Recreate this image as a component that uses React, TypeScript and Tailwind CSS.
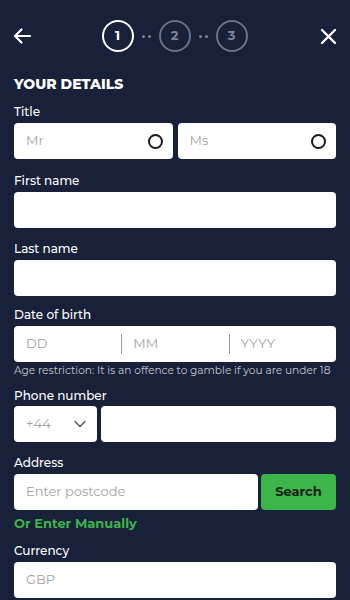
import React from "react";

const font = { fontFamily: '"Montserrat", "Open Sans", "Liberation Sans", sans-serif' };

function Label({ children, className = "" }: { children: React.ReactNode; className?: string }) {
  return <div className={`text-[12px] leading-[16px] font-medium text-white ${className}`}>{children}</div>;
}

function Box({ children, className = "" }: { children?: React.ReactNode; className?: string }) {
  return (
    <div className={`h-[36px] bg-white rounded-[4px] flex items-center text-[13px] text-[#a3a3a3] ${className}`}>
      {children}
    </div>
  );
}

function Radio({ label }: { label: string }) {
  return (
    <Box className="flex-1 justify-between pl-[12px] pr-[10px]">
      <span>{label}</span>
      <span className="w-[15px] h-[15px] rounded-full border-[2px] border-[#1a1a1a]" />
    </Box>
  );
}

function Step({ n, active }: { n: number; active?: boolean }) {
  return (
    <div
      className={`w-[32px] h-[32px] rounded-full flex items-center justify-center text-[13px] font-bold ${
        active ? "border-[2px] border-white text-white" : "border-[2px] border-[#6b7287] text-[#7d8497]"
      }`}
    >
      {n}
    </div>
  );
}

function Dots() {
  return (
    <div className="w-[25px] flex items-center justify-center gap-[3px]">
      <span className="w-[3px] h-[3px] rounded-full bg-[#7d8497]" />
      <span className="w-[3px] h-[3px] rounded-full bg-[#7d8497]" />
    </div>
  );
}

export default function App() {
  return (
    <div className="w-[350px] h-[600px] overflow-hidden bg-[#18203a] px-[14px]" style={font}>
      <div className="pt-[20px] flex items-center justify-between">
        <svg width="18" height="16" viewBox="0 0 18 16" fill="none" stroke="white" strokeWidth="2.2" strokeLinecap="round" strokeLinejoin="round" className="-ml-[1px]">
          <path d="M17 8H2M8.5 1.5L2 8l6.5 6.5" />
        </svg>
        <div className="flex items-center -ml-[2px]">
          <Step n={1} active />
          <Dots />
          <Step n={2} />
          <Dots />
          <Step n={3} />
        </div>
        <svg width="17" height="17" viewBox="0 0 17 17" fill="none" stroke="white" strokeWidth="2.4" strokeLinecap="round" className="-mr-[1px]">
          <path d="M2 2l13 13M15 2L2 15" />
        </svg>
      </div>

      <div className="mt-[22px] text-[14px] leading-[20px] font-extrabold text-white">YOUR DETAILS</div>

      <Label className="mt-[10px]">Title</Label>
      <div className="mt-[3px] flex gap-[5px]">
        <Radio label="Mr" />
        <Radio label="Ms" />
      </div>

      <Label className="mt-[14px]">First name</Label>
      <Box className="mt-[3px]" />

      <Label className="mt-[13px]">Last name</Label>
      <Box className="mt-[3px]" />

      <Label className="mt-[11px]">Date of birth</Label>
      <Box className="mt-[3px]">
        <div className="flex-1 pl-[12px]">DD</div>
        <div className="w-[1px] h-[20px] bg-[#9a9a9a]" />
        <div className="flex-1 pl-[11px]">MM</div>
        <div className="w-[1px] h-[20px] bg-[#9a9a9a]" />
        <div className="flex-1 pl-[11px]">YYYY</div>
      </Box>
      <div className="mt-[2px] text-[10.6px] leading-[14px] text-[#c4c7d0] whitespace-nowrap">
        Age restriction: It is an offence to gamble if you are under 18
      </div>

      <Label className="mt-[10px]">Phone number</Label>
      <div className="mt-[2px] flex gap-[4px]">
        <Box className="w-[83px] justify-between pl-[12px] pr-[11px] text-[#6b6b6b]">
          <span>+44</span>
          <svg width="12" height="8" viewBox="0 0 12 8" fill="none" stroke="#555" strokeWidth="1.4" strokeLinecap="round" strokeLinejoin="round">
            <path d="M1 1.5l5 5 5-5" />
          </svg>
        </Box>
        <Box className="flex-1" />
      </div>

      <Label className="mt-[13px]">Address</Label>
      <div className="mt-[3px] flex gap-[3px]">
        <Box className="flex-1 pl-[12px]">Enter postcode</Box>
        <button className="w-[75px] h-[36px] rounded-[4px] bg-[#3cb54a] text-[#16201a] text-[13px] font-bold">Search</button>
      </div>
      <div className="mt-[4px] text-[13px] leading-[18px] font-bold text-[#3cb54a]">Or Enter Manually</div>

      <Label className="mt-[11px]">Currency</Label>
      <Box className="mt-[3px] pl-[12px] text-[#6b6b6b]">GBP</Box>
    </div>
  );
}
